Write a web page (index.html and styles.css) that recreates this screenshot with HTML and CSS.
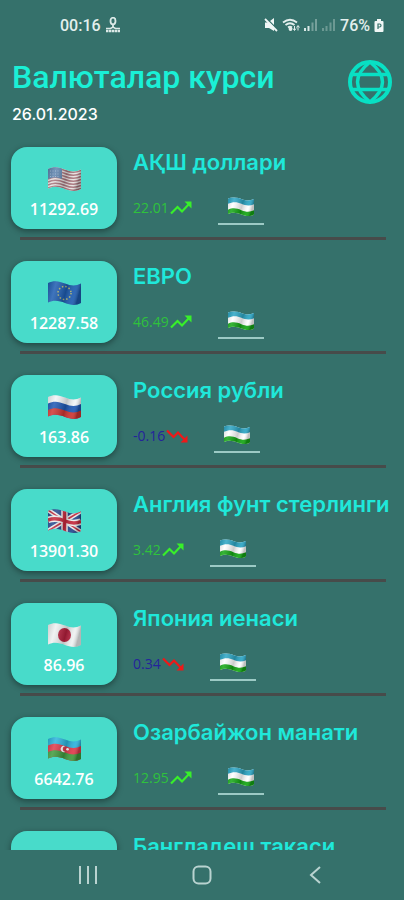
FILE: index.html
```html
<!DOCTYPE html>
<html lang="uz">
<head>
    <meta charset="UTF-8">
    <meta name="viewport" content="width=device-width, initial-scale=1">
    <title>Валюталар курси</title>
    <link rel="stylesheet" href="styles.css">
</head>
<body>
    <!-- Shared icons and flags -->
    <svg class="sprite" width="0" height="0" aria-hidden="true">
        <defs>
            <clipPath id="wave">
                <path d="M0 2C6-1 11 0 17 2.500S28 5 33 2.500V22C28 25 22 24 17 22S6 18.500 0 21.500Z"/>
            </clipPath>
            <linearGradient id="fold" x1="0" x2="1" y1="0" y2="0.200">
                <stop offset="0" stop-color="#000" stop-opacity="0.150"/>
                <stop offset="0.250" stop-color="#fff" stop-opacity="0.150"/>
                <stop offset="0.600" stop-color="#000" stop-opacity="0.200"/>
                <stop offset="0.850" stop-color="#fff" stop-opacity="0.080"/>
                <stop offset="1" stop-color="#000" stop-opacity="0.250"/>
            </linearGradient>
        </defs>
        <symbol id="up" viewBox="0 0 22 14">
            <path d="M1 12.500 7.500 6l4.500 4.500L19 3" fill="none" stroke="currentColor" stroke-width="2.200"/>
            <path d="M14.500 0.500H21.500V7.500Z" fill="currentColor"/>
        </symbol>
        <symbol id="down" viewBox="0 0 22 14">
            <path d="M1 1.500 7.500 8l4.500-4.500L19 11" fill="none" stroke="currentColor" stroke-width="2.200"/>
            <path d="M14.500 13.500H21.500V6.500Z" fill="currentColor"/>
        </symbol>
        <symbol id="flag-us" viewBox="0 0 33 25">
            <g clip-path="url(#wave)">
                <path d="M0 0H33V25H0Z" fill="#e9e3e2"/>
                <g fill="none" stroke="#a8747c" stroke-width="1.500">
                    <path d="M0 3C6 0 11 1 17 3.500S28 6 33 3.500"/>
                    <path d="M0 6C6 3 11 4 17 6.500S28 9 33 6.500"/>
                    <path d="M0 9C6 6 11 7 17 9.500S28 12 33 9.500"/>
                    <path d="M0 12C6 9 11 10 17 12.500S28 15 33 12.500"/>
                    <path d="M0 15C6 12 11 13 17 15.500S28 18 33 15.500"/>
                    <path d="M0 18C6 15 11 16 17 18.500S28 21 33 18.500"/>
                    <path d="M0 21C6 18 11 19 17 21.500S28 24 33 21.500"/>
                </g>
                <path d="M0 0H14V12C9 10 5 10 0 12Z" fill="#5d83ae"/>
                <path d="M2 4h10M2 7h10M2 9.500h10" stroke="#a9c0d8" stroke-width="0.800" stroke-dasharray="1 1.500"/>
                <path d="M0 0H33V25H0Z" fill="url(#fold)"/>
            </g>
        </symbol>
        <symbol id="flag-eu" viewBox="0 0 33 25">
            <g clip-path="url(#wave)">
                <path d="M0 0H33V25H0Z" fill="#1d5cb0"/>
                <circle cx="16.500" cy="12" r="6.500" fill="none" stroke="#b6ba72" stroke-width="1.500" stroke-dasharray="1.500 1.900"/>
                <path d="M0 0H33V25H0Z" fill="url(#fold)"/>
            </g>
        </symbol>
        <symbol id="flag-ru" viewBox="0 0 33 25">
            <g clip-path="url(#wave)">
                <path d="M0 0H33V25H0Z" fill="#f1f4f7"/>
                <path d="M0 8.500C6 5.500 11 6.500 17 9S28 11.500 33 9V25H0Z" fill="#1d57b4"/>
                <path d="M0 15C6 12 11 13 17 15.500S28 18 33 15.500V25H0Z" fill="#cf3531"/>
                <path d="M0 0H33V25H0Z" fill="url(#fold)"/>
            </g>
        </symbol>
        <symbol id="flag-gb" viewBox="0 0 33 25">
            <g clip-path="url(#wave)">
                <path d="M0 0H33V25H0Z" fill="#25488e"/>
                <path d="M0 1 33 23M33 2 0 22" stroke="#eee" stroke-width="4.500"/>
                <path d="M0 1 33 23M33 2 0 22" stroke="#c6283c" stroke-width="1.500"/>
                <path d="M16.500 0V25M0 11C6 9 11 9.500 17 12S28 14.500 33 12.500" fill="none" stroke="#eee" stroke-width="6.500"/>
                <path d="M16.500 0V25M0 11C6 9 11 9.500 17 12S28 14.500 33 12.500" fill="none" stroke="#c6283c" stroke-width="3.500"/>
                <path d="M0 0H33V25H0Z" fill="url(#fold)"/>
            </g>
        </symbol>
        <symbol id="flag-jp" viewBox="0 0 33 25">
            <g clip-path="url(#wave)">
                <path d="M0 0H33V25H0Z" fill="#eef1f1"/>
                <ellipse cx="16.500" cy="12" rx="6.500" ry="7" fill="#b51f3c"/>
                <path d="M0 0H33V25H0Z" fill="url(#fold)"/>
            </g>
        </symbol>
        <symbol id="flag-az" viewBox="0 0 33 25">
            <g clip-path="url(#wave)">
                <path d="M0 0H33V25H0Z" fill="#2bb3dd"/>
                <path d="M0 8.500C6 5.500 11 6.500 17 9S28 11.500 33 9V25H0Z" fill="#e0394b"/>
                <path d="M0 15C6 12 11 13 17 15.500S28 18 33 15.500V25H0Z" fill="#3f9a3c"/>
                <path d="M17.500 9.300A3.200 3.200 0 1 0 17.500 14.700 2.600 2.600 0 1 1 17.500 9.300Z" fill="#fff"/>
                <circle cx="19.500" cy="12.200" r="1.300" fill="#fff"/>
                <path d="M0 0H33V25H0Z" fill="url(#fold)"/>
            </g>
        </symbol>
        <symbol id="flag-uz" viewBox="0 0 33 25">
            <g clip-path="url(#wave)">
                <path d="M0 0H33V25H0Z" fill="#fff"/>
                <path d="M0 0H33V9C28 11.500 22 11 17 8.500S6 5.500 0 8.500Z" fill="#2ba5c4"/>
                <path d="M0 16C6 13 11 14 17 16.500S28 19 33 16.500V25H0Z" fill="#14a714"/>
                <path d="M0 0H33V25H0Z" fill="url(#fold)"/>
            </g>
        </symbol>
    </svg>

    <div class="status">
        <div class="status-left">
            <span>00:16</span>
            <svg width="16" height="16" viewBox="0 0 16 16" fill="none" stroke="#dbe9e7">
                <ellipse cx="8" cy="4" rx="2.500" ry="3.300" stroke-width="1.800"/>
                <path d="M8 7V10" stroke-width="1.800"/>
                <path d="M1 11.500H5.500L8 10L10.500 11.500H15" stroke-width="1.500"/>
                <path d="M1 14H15" stroke-width="2.500" stroke-dasharray="2.500 0.500"/>
            </svg>
        </div>
        <div class="status-right">
            <svg width="14" height="14" viewBox="0 0 14 14">
                <path d="M1 4.500H4L10 0V13L5 10H1Z" fill="#f0f7f6"/>
                <path d="M2 0 14 12" stroke="#35716b" stroke-width="1.500"/>
                <path d="M1 1 13 13" stroke="#f0f7f6" stroke-width="1.800"/>
            </svg>
            <svg width="18" height="14" viewBox="0 0 18 14" fill="none" stroke="#e3efed" stroke-width="1.800">
                <path d="M1 4.500Q8 -1 15 4.500M3.500 7Q8 3.500 12.500 7M6 9.500Q8 8 10 9.500"/>
                <circle cx="8.500" cy="11" r="1" fill="#e3efed"/>
                <path d="M12.500 8V12M11 10.500 12.500 12.500 14 10.500M16 12.500V8M14.500 9.500 16 7.500 17.500 9.500" stroke-width="1"/>
            </svg>
            <svg width="14" height="12" viewBox="0 0 14 12">
                <path d="M0 9h2v3H0zM3.500 7h2v5h-2z" fill="#d9e8e6"/>
                <path d="M7.500 3.500h2V12h-2zM11 0h2v12h-2z" fill="#76a09b"/>
            </svg>
            <svg width="14" height="12" viewBox="0 0 14 12">
                <path d="M0 9h2v3H0zM3.500 7h2v5h-2zM7.500 3.500h2V12h-2zM11 0h2v12h-2z" fill="#6c9993"/>
            </svg>
            <span>76%</span>
            <svg width="10" height="13" viewBox="0 0 10 13">
                <path d="M3 0H7V2H8.500Q9.500 2 9.500 3V12Q9.500 13 8.500 13H1.500Q0.500 13 0.500 12V3Q0.500 2 1.500 2H3Z" fill="#f0f7f6"/>
                <path d="M4 10V5H5.500A1.500 1.500 0 0 1 5.500 8H4" fill="none" stroke="#35716b" stroke-width="1.200"/>
            </svg>
        </div>
    </div>

    <header class="header">
        <div>
            <h1>Валюталар курси</h1>
            <p class="date">26.01.2023</p>
        </div>
        <button type="button" class="lang" aria-label="Тил">
            <svg width="44" height="44" viewBox="0 0 44 44" fill="none" stroke="currentColor" stroke-width="4">
                <circle cx="22" cy="22" r="20"/>
                <path d="M22 2C12 10 9.500 16 9.500 22S12 34 22 42C32 34 34.500 28 34.500 22S32 10 22 2Z" stroke-width="3.500"/>
                <path d="M4 14.500H40M4 29.500H40" stroke-width="3.500"/>
            </svg>
        </button>
    </header>

    <main class="list">
        <section class="row">
            <div class="card"><svg class="flag"><use href="#flag-us"/></svg><span>11292.69</span></div>
            <div class="info">
                <h2>АҚШ доллари</h2>
                <div class="details">
                    <span class="diff">22.01</span><svg class="trend up"><use href="#up"/></svg>
                    <button type="button" class="convert" aria-label="Сўм"><svg class="flag-small"><use href="#flag-uz"/></svg></button>
                </div>
            </div>
        </section>
        <section class="row">
            <div class="card"><svg class="flag"><use href="#flag-eu"/></svg><span>12287.58</span></div>
            <div class="info">
                <h2>ЕВРО</h2>
                <div class="details">
                    <span class="diff">46.49</span><svg class="trend up"><use href="#up"/></svg>
                    <button type="button" class="convert" aria-label="Сўм"><svg class="flag-small"><use href="#flag-uz"/></svg></button>
                </div>
            </div>
        </section>
        <section class="row">
            <div class="card"><svg class="flag"><use href="#flag-ru"/></svg><span>163.86</span></div>
            <div class="info">
                <h2>Россия рубли</h2>
                <div class="details">
                    <span class="diff minus">-0.16</span><svg class="trend down"><use href="#down"/></svg>
                    <button type="button" class="convert" aria-label="Сўм"><svg class="flag-small"><use href="#flag-uz"/></svg></button>
                </div>
            </div>
        </section>
        <section class="row">
            <div class="card"><svg class="flag"><use href="#flag-gb"/></svg><span>13901.30</span></div>
            <div class="info">
                <h2>Англия фунт стерлинги</h2>
                <div class="details">
                    <span class="diff">3.42</span><svg class="trend up"><use href="#up"/></svg>
                    <button type="button" class="convert" aria-label="Сўм"><svg class="flag-small"><use href="#flag-uz"/></svg></button>
                </div>
            </div>
        </section>
        <section class="row">
            <div class="card"><svg class="flag"><use href="#flag-jp"/></svg><span>86.96</span></div>
            <div class="info">
                <h2>Япония иенаси</h2>
                <div class="details">
                    <span class="diff minus">0.34</span><svg class="trend down"><use href="#down"/></svg>
                    <button type="button" class="convert" aria-label="Сўм"><svg class="flag-small"><use href="#flag-uz"/></svg></button>
                </div>
            </div>
        </section>
        <section class="row">
            <div class="card"><svg class="flag"><use href="#flag-az"/></svg><span>6642.76</span></div>
            <div class="info">
                <h2>Озарбайжон манати</h2>
                <div class="details">
                    <span class="diff">12.95</span><svg class="trend up"><use href="#up"/></svg>
                    <button type="button" class="convert" aria-label="Сўм"><svg class="flag-small"><use href="#flag-uz"/></svg></button>
                </div>
            </div>
        </section>
        <section class="row">
            <div class="card"></div>
            <div class="info">
                <h2>Бангладеш такаси</h2>
            </div>
        </section>
    </main>

    <nav class="navbar">
        <button type="button" aria-label="Recents">
            <svg width="20" height="20" viewBox="0 0 20 20" stroke="currentColor" stroke-width="2"><path d="M2 1V19M10 1V19M18 1V19"/></svg>
        </button>
        <button type="button" aria-label="Home">
            <svg width="20" height="20" viewBox="0 0 20 20" fill="none" stroke="currentColor" stroke-width="2"><rect x="1.500" y="1.500" width="17" height="17" rx="5"/></svg>
        </button>
        <button type="button" aria-label="Back">
            <svg width="20" height="20" viewBox="0 0 20 20" fill="none" stroke="currentColor" stroke-width="2"><path d="M14 2 5 10 14 18"/></svg>
        </button>
    </nav>
</body>
</html>
```

FILE: styles.css
```css
* {
    box-sizing: border-box;
}

body {
    display: flex;
    flex-direction: column;
    height: 100vh;
    margin: 0;
    background-color: #35716b;
    color: #ffffff;
    font-family: "Open Sans", sans-serif;
    overflow: hidden;
}

h1, h2, p {
    margin: 0;
}

button {
    padding: 0;
    border: none;
    background: none;
    color: inherit;
    cursor: pointer;
}

svg {
    display: block;
    flex-shrink: 0;
}

.sprite {
    position: absolute;
}

/* Status bar */
.status {
    display: flex;
    justify-content: space-between;
    align-items: center;
    height: 50px;
    padding: 0 20px 0 60px;
    font-family: Roboto, sans-serif;
    font-size: 16px;
    font-weight: 500;
    color: #e3efed;
}

.status-left,
.status-right {
    display: flex;
    align-items: center;
    gap: 4px;
}

/* Header */
.header {
    display: flex;
    justify-content: space-between;
    padding: 10px 12px;
    height: 92px;
}

h1 {
    font-family: Roboto, sans-serif;
    font-size: 32px;
    line-height: 34px;
    font-weight: 500;
    color: #1af0d6;
    white-space: nowrap;
}

.date {
    margin-top: 10px;
    font-family: Inter, sans-serif;
    font-size: 16px;
    line-height: 20px;
    font-weight: 500;
}

.lang {
    height: 44px;
    color: #08e0c4;
}

/* Currency list */
.list {
    flex: 1;
    min-height: 0;
    overflow: hidden;
    padding-top: 5px;
}

.row {
    display: flex;
    gap: 16px;
    height: 114px;
    padding-left: 11px;
    background: linear-gradient(#474b4a, #474b4a) no-repeat 20px 90px / calc(100% - 38px) 3px;
}

.card {
    display: flex;
    flex-direction: column;
    align-items: center;
    flex-shrink: 0;
    width: 106px;
    height: 82px;
    padding-top: 20px;
    border-radius: 16px;
    background-color: #48dbca;
    box-shadow: 0 2px 6px rgba(0, 0, 0, 0.4);
    font-size: 16px;
    line-height: 20px;
    font-weight: 600;
}

.flag {
    width: 33px;
    height: 25px;
    margin-bottom: 7px;
}

.info h2 {
    margin-top: 2px;
    font-family: Inter, sans-serif;
    font-size: 22px;
    line-height: 26px;
    font-weight: 600;
    color: #1fe8da;
    white-space: nowrap;
}

.details {
    display: flex;
    align-items: center;
    margin-top: 16px;
}

.diff {
    font-size: 14px;
    line-height: 20px;
    color: #2fc23c;
}

.minus {
    color: #24249b;
}

.trend {
    width: 22px;
    height: 14px;
    margin-left: 1px;
}

.up {
    color: #38f02a;
}

.down {
    color: #f01818;
}

.convert {
    width: 46px;
    height: 34px;
    margin-left: 26px;
    border-bottom: 2px solid #9ccac5;
}

.flag-small {
    width: 26px;
    height: 20px;
    margin: 0 auto;
}

/* Bottom navigation */
.navbar {
    display: flex;
    justify-content: space-between;
    align-items: center;
    height: 50px;
    padding: 0 78px;
    color: #b9d3d0;
}
```
